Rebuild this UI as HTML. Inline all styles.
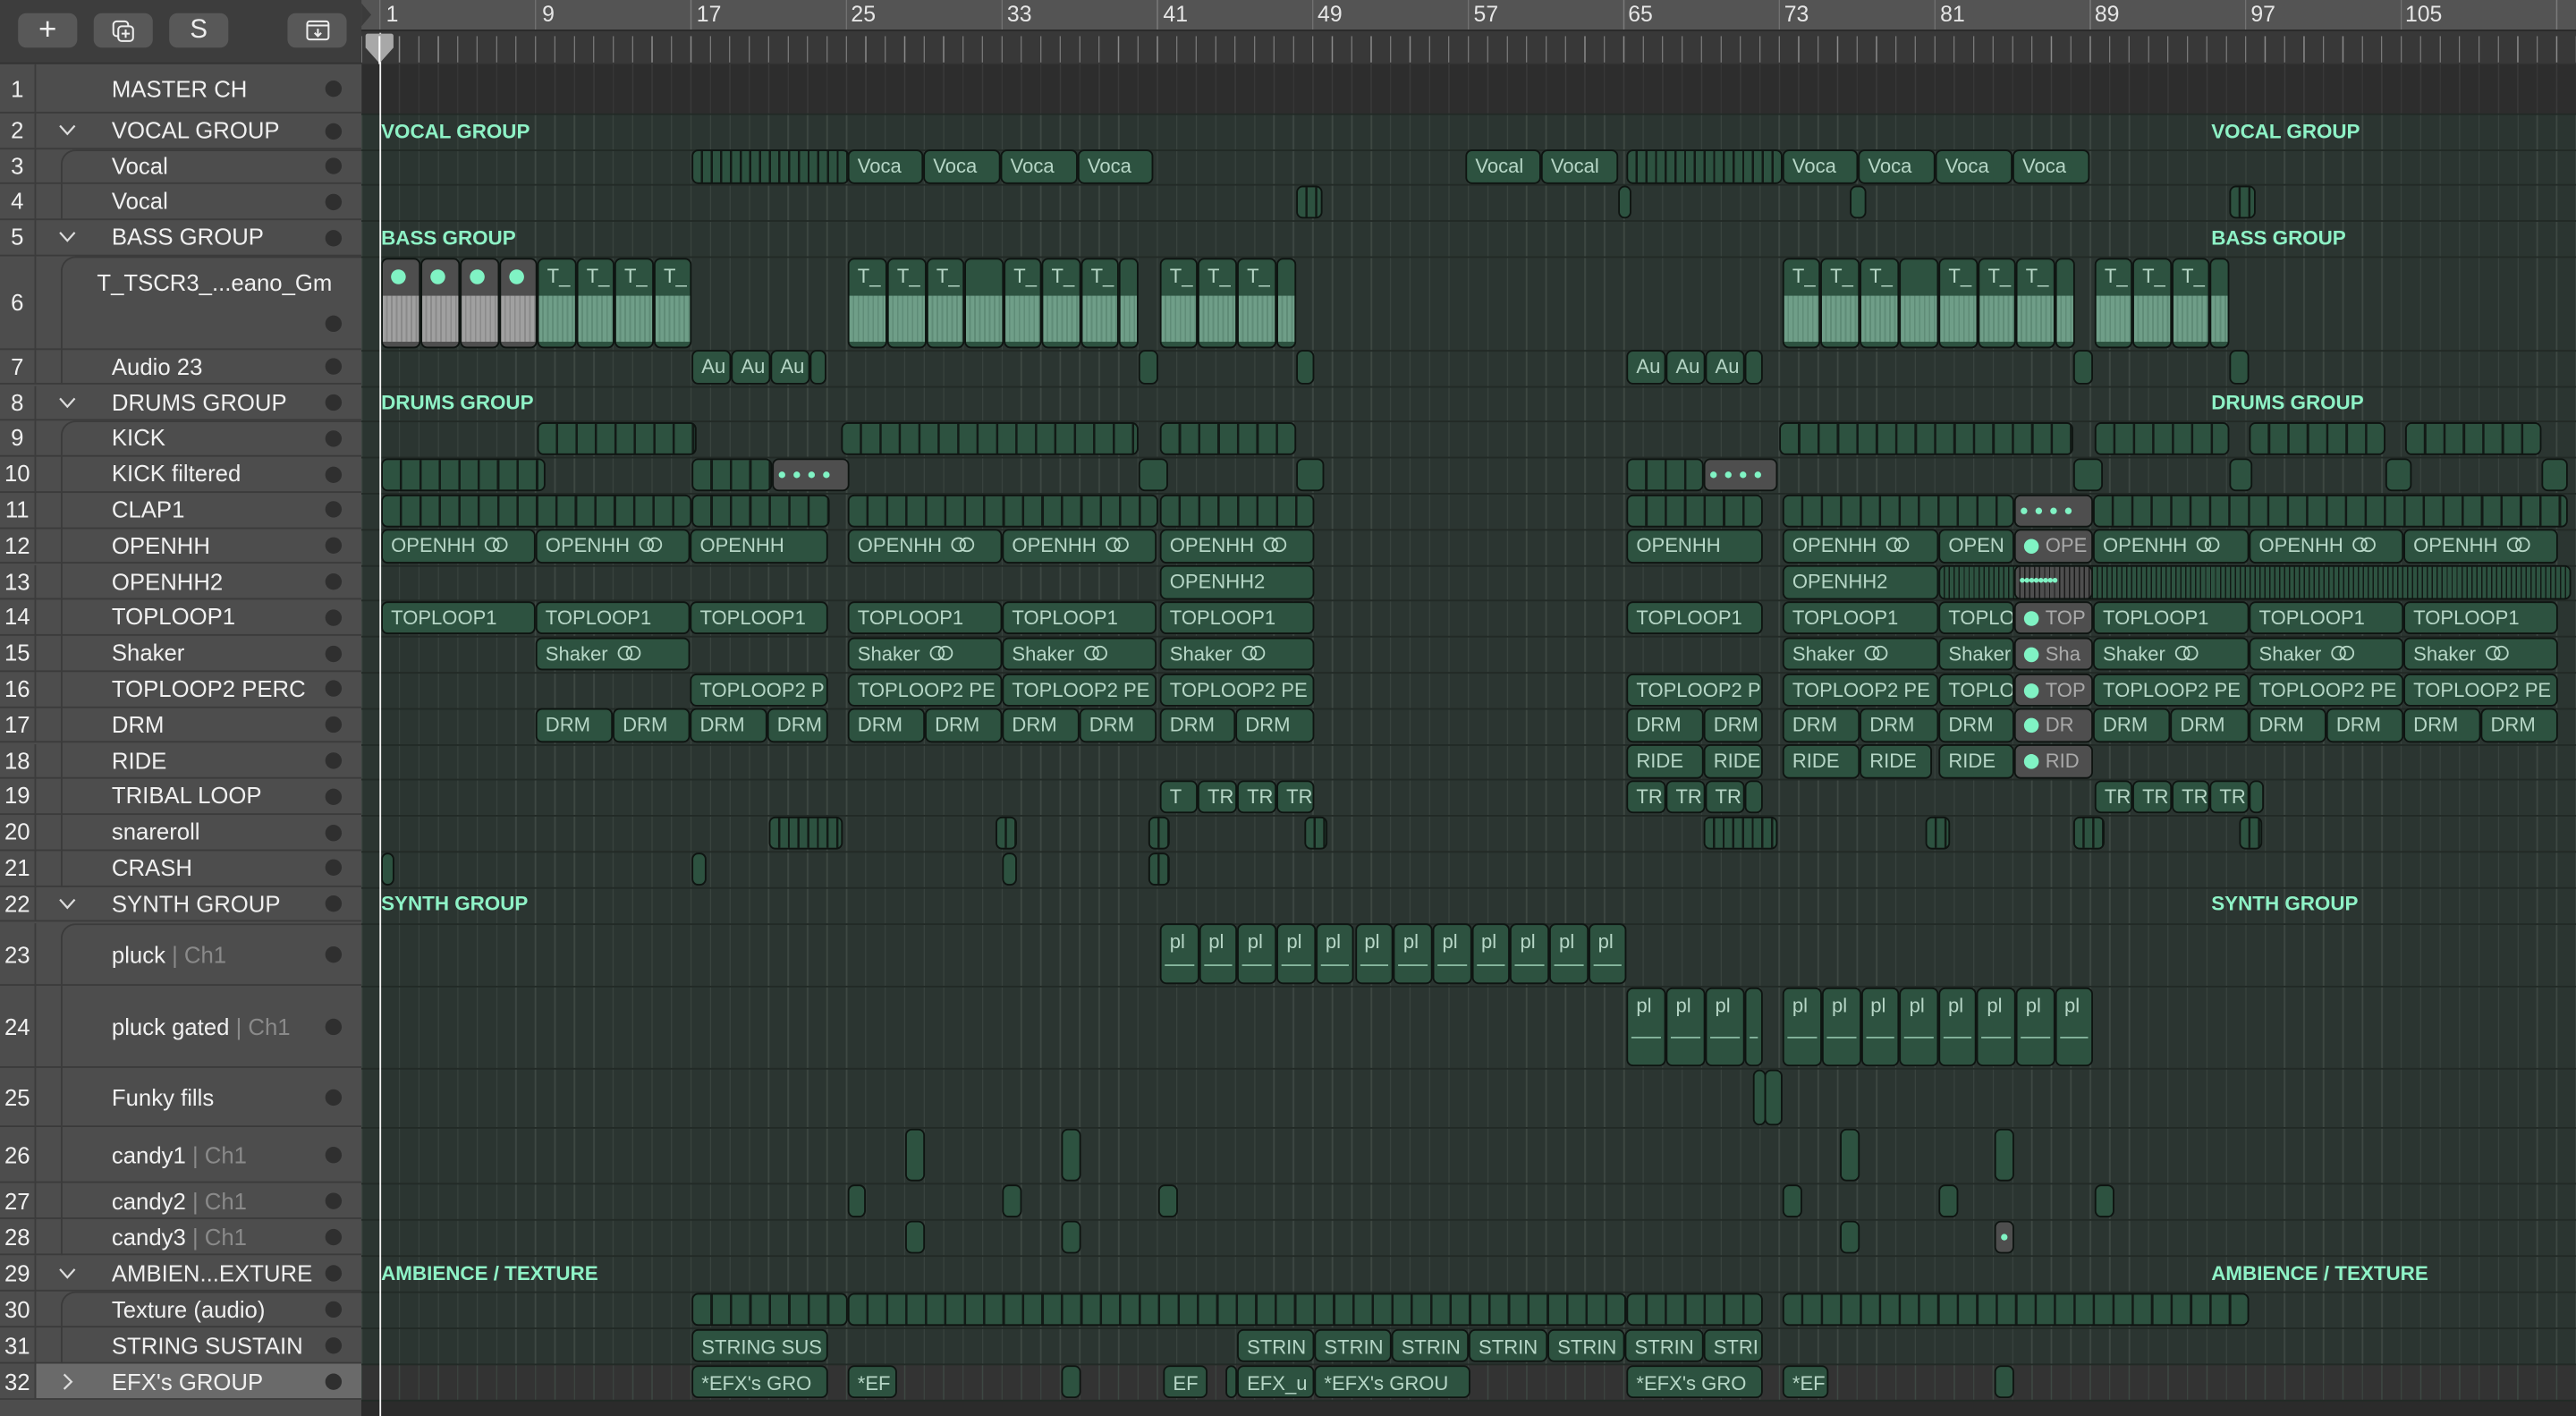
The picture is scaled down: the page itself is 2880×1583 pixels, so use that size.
<!DOCTYPE html>
<html><head><meta charset="utf-8"><style>
html,body{margin:0;padding:0;width:2880px;height:1582px;overflow:hidden;background:#2a2a2a}
#s{position:absolute;left:0;top:0;width:1568px;height:862px;transform:scale(1.83673);transform-origin:0 0;overflow:hidden;background:#2b2b2b;font-family:"Liberation Sans",sans-serif}
.lp{position:absolute;left:0;top:0;width:220px;height:862px;background:#4d4d4d}
.hd{position:absolute;left:0;top:0;width:220px;height:38px;background:#3d3d3d;border-bottom:1px solid #333}
.bt{position:absolute;top:7.5px;height:21.5px;background:#585858;border-radius:5px;color:#eee;text-align:center;line-height:21px;font-size:15px}
.L{position:absolute;left:0;width:220px;box-sizing:border-box;border-bottom:1px solid #3b3b3b;color:#f0f0f0;font-size:14px}
.L .n{position:absolute;left:0;width:22px;text-align:center;border-right:1px solid #3b3b3b;height:100%;box-sizing:border-box}
.L .t{position:absolute;left:68px;white-space:nowrap}
.L .c{position:absolute;left:35px;top:50%;margin-top:-5px;width:12px;height:10px}
.L .o{position:absolute;left:198px;width:10px;height:10px;border-radius:50%;background:#2f2f2f}
.L .gy{color:#8a8a8a}
.br{position:absolute;left:37px;border-left:1.5px solid #3b3b3b;border-top:1.5px solid #3b3b3b;border-top-left-radius:9px;width:183px;box-sizing:border-box}
.tl{position:absolute;left:220px;top:0;width:1348px;height:862px}
.ru{position:absolute;left:0;top:0;width:1348px;height:18px;background:#545454;background-image:repeating-linear-gradient(90deg,#7a7a7a 0 0.6px,transparent 0.6px 94.64px);background-position:11px 0}
.rn{position:absolute;top:0;color:#e6e6e6;font-size:13.5px;line-height:17px}
.tk{position:absolute;left:0;top:18px;width:1348px;height:21px;background:#383838;border-top:1.5px solid #2a2a2a;box-sizing:border-box;background-image:repeating-linear-gradient(90deg,#8a8a8a 0 0.6px,transparent 0.6px 11.83px);background-position:11px 3px;background-size:100% 16px;background-repeat:repeat-x}
.bg{position:absolute;left:0;width:1348px;background-color:#2b3531;background-image:repeating-linear-gradient(90deg,#3e4843 0 0.7px,transparent 0.7px 11.83px);background-position:11px 0}
.hl{position:absolute;left:220px;width:1348px;height:1px;background:#222a26}
.R{position:absolute;left:0;width:1568px}
.g{position:absolute;top:0.8px;bottom:0.8px;display:block;font-style:normal;background:#2d5240;border:1.1px solid #0e1411;border-radius:4px;box-sizing:border-box;color:#b6d6c6;font-size:12px;padding-left:5px;overflow:hidden;white-space:nowrap}
.d{background:repeating-linear-gradient(90deg,#2d5240 0 4.6px,#121a16 4.6px 5.9px)}
.d2{background:repeating-linear-gradient(90deg,#2d5240 0 10.4px,#121a16 10.4px 11.83px)}
.s{background:#4e4e4e}
.m{display:inline-block;width:9px;height:9px;border-radius:50%;background:#80f3c4;vertical-align:-1px;margin-right:4px}
.ms{display:inline-block;width:4px;height:4px;border-radius:50%;background:#80f3c4;margin:0 2.5px;vertical-align:2px}
.lo{display:inline-block;position:relative;width:15px;height:10px;margin-left:6px;vertical-align:-1px}
.lo:before,.lo:after{content:"";position:absolute;top:0;width:9px;height:9px;border:1.2px solid #b6d6c6;border-radius:50%;box-sizing:border-box}
.lo:before{left:0}.lo:after{left:5px}
.gl{position:absolute;color:#8ef2c6;font-weight:bold;font-size:12.2px;white-space:nowrap}
.w{position:absolute;left:0;right:0;bottom:3px;height:52%;background:repeating-linear-gradient(90deg,#6f9e88 0 2px,#5f8c77 2px 3px)}
.wg{background:repeating-linear-gradient(90deg,#a0a0a0 0 2px,#8a8a8a 2px 3px)}
.tp{line-height:14px;padding-top:3px}
.pl{position:absolute;left:2px;right:2px;height:1.2px;background:#88b8a0}
</style></head><body><div id="s">

<!-- LEFT PANEL -->
<div class="lp">
<div class="hd">
<div class="bt" style="left:11px;width:36px;font-size:19px;font-weight:300">+</div>
<div class="bt" style="left:57px;width:36px"><svg width="14" height="14" viewBox="0 0 14 14" style="margin-top:4px"><rect x="1" y="1" width="9" height="9" rx="2" fill="none" stroke="#eee" stroke-width="1.1"/><rect x="4" y="4" width="9" height="9" rx="2" fill="#585858" stroke="#eee" stroke-width="1.1"/><path d="M8.5 6v5M6 8.5h5" stroke="#eee" stroke-width="1.1"/></svg></div>
<div class="bt" style="left:103px;width:36px;font-size:16px">S</div>
<div class="bt" style="left:175px;width:36px"><svg width="15" height="13" viewBox="0 0 15 13" style="margin-top:4px"><rect x="1" y="1" width="13" height="11" rx="1.5" fill="none" stroke="#eee" stroke-width="1.1"/><path d="M1 3.5h13M7.5 5.5v4.5M5.5 8l2 2 2-2" fill="none" stroke="#eee" stroke-width="1.1"/></svg></div>
</div>

<div class="L" style="top:39px;height:30px;line-height:30px"><span class="n">1</span><span class="t">MASTER CH</span><span class="o" style="top:10px"></span></div>
<div class="L" style="top:69px;height:21.5px;line-height:21px"><span class="n">2</span><svg class="c" viewBox="0 0 12 10"><path d="M1.5 2.5 L6 7.5 L10.5 2.5" fill="none" stroke="#ddd" stroke-width="1.2"/></svg><span class="t">VOCAL GROUP</span><span class="o" style="top:5.5px"></span></div>
<div class="L" style="top:90.5px;height:21.8px;line-height:21px"><span class="n">3</span><span class="t">Vocal</span><span class="o" style="top:5.5px"></span></div>
<div class="L" style="top:112.3px;height:21.8px;line-height:21px"><span class="n">4</span><span class="t">Vocal</span><span class="o" style="top:5.5px"></span></div>
<div class="L" style="top:134.1px;height:21.8px;line-height:21px"><span class="n">5</span><svg class="c" viewBox="0 0 12 10"><path d="M1.5 2.5 L6 7.5 L10.5 2.5" fill="none" stroke="#ddd" stroke-width="1.2"/></svg><span class="t">BASS GROUP</span><span class="o" style="top:5.5px"></span></div>
<div class="L" style="top:155.9px;height:56.8px;line-height:56px"><span class="n">6</span><span class="t" style="left:59px;line-height:18px;top:7px">T_TSCR3_...eano_Gm</span><span class="o" style="top:36px"></span></div>
<div class="L" style="top:212.7px;height:21.8px;line-height:21px"><span class="n">7</span><span class="t">Audio 23</span><span class="o" style="top:5.5px"></span></div>
<div class="L" style="top:234.5px;height:21.8px;line-height:21px"><span class="n">8</span><svg class="c" viewBox="0 0 12 10"><path d="M1.5 2.5 L6 7.5 L10.5 2.5" fill="none" stroke="#ddd" stroke-width="1.2"/></svg><span class="t">DRUMS GROUP</span><span class="o" style="top:5.5px"></span></div>
<div class="L" style="top:256.3px;height:21.8px;line-height:21px"><span class="n">9</span><span class="t">KICK</span><span class="o" style="top:5.5px"></span></div>
<div class="L" style="top:278.1px;height:21.8px;line-height:21px"><span class="n">10</span><span class="t">KICK filtered</span><span class="o" style="top:5.5px"></span></div>
<div class="L" style="top:299.9px;height:21.8px;line-height:21px"><span class="n">11</span><span class="t">CLAP1</span><span class="o" style="top:5.5px"></span></div>
<div class="L" style="top:321.7px;height:21.8px;line-height:21px"><span class="n">12</span><span class="t">OPENHH</span><span class="o" style="top:5.5px"></span></div>
<div class="L" style="top:343.5px;height:21.8px;line-height:21px"><span class="n">13</span><span class="t">OPENHH2</span><span class="o" style="top:5.5px"></span></div>
<div class="L" style="top:365.3px;height:21.8px;line-height:21px"><span class="n">14</span><span class="t">TOPLOOP1</span><span class="o" style="top:5.5px"></span></div>
<div class="L" style="top:387.1px;height:21.8px;line-height:21px"><span class="n">15</span><span class="t">Shaker</span><span class="o" style="top:5.5px"></span></div>
<div class="L" style="top:408.9px;height:21.8px;line-height:21px"><span class="n">16</span><span class="t">TOPLOOP2 PERC</span><span class="o" style="top:5.5px"></span></div>
<div class="L" style="top:430.7px;height:21.8px;line-height:21px"><span class="n">17</span><span class="t">DRM</span><span class="o" style="top:5.5px"></span></div>
<div class="L" style="top:452.5px;height:21.8px;line-height:21px"><span class="n">18</span><span class="t">RIDE</span><span class="o" style="top:5.5px"></span></div>
<div class="L" style="top:474.3px;height:21.8px;line-height:21px"><span class="n">19</span><span class="t">TRIBAL LOOP</span><span class="o" style="top:5.5px"></span></div>
<div class="L" style="top:496.1px;height:21.8px;line-height:21px"><span class="n">20</span><span class="t">snareroll</span><span class="o" style="top:5.5px"></span></div>
<div class="L" style="top:517.9px;height:21.8px;line-height:21px"><span class="n">21</span><span class="t">CRASH</span><span class="o" style="top:5.5px"></span></div>
<div class="L" style="top:539.7px;height:21.8px;line-height:21px"><span class="n">22</span><svg class="c" viewBox="0 0 12 10"><path d="M1.5 2.5 L6 7.5 L10.5 2.5" fill="none" stroke="#ddd" stroke-width="1.2"/></svg><span class="t">SYNTH GROUP</span><span class="o" style="top:5.5px"></span></div>
<div class="L" style="top:561.5px;height:38.5px;line-height:38px"><span class="n">23</span><span class="t">pluck <span class="gy">| Ch1</span></span><span class="o" style="top:14px"></span></div>
<div class="L" style="top:600px;height:50px;line-height:50px"><span class="n">24</span><span class="t">pluck gated <span class="gy">| Ch1</span></span><span class="o" style="top:20px"></span></div>
<div class="L" style="top:650px;height:36px;line-height:36px"><span class="n">25</span><span class="t">Funky fills</span><span class="o" style="top:13px"></span></div>
<div class="L" style="top:686px;height:34px;line-height:34px"><span class="n">26</span><span class="t">candy1 <span class="gy">| Ch1</span></span><span class="o" style="top:12px"></span></div>
<div class="L" style="top:720px;height:22px;line-height:22px"><span class="n">27</span><span class="t">candy2 <span class="gy">| Ch1</span></span><span class="o" style="top:6px"></span></div>
<div class="L" style="top:742px;height:22px;line-height:22px"><span class="n">28</span><span class="t">candy3 <span class="gy">| Ch1</span></span><span class="o" style="top:6px"></span></div>
<div class="L" style="top:764px;height:22px;line-height:22px"><span class="n">29</span><svg class="c" viewBox="0 0 12 10"><path d="M1.5 2.5 L6 7.5 L10.5 2.5" fill="none" stroke="#ddd" stroke-width="1.2"/></svg><span class="t">AMBIEN...EXTURE</span><span class="o" style="top:6px"></span></div>
<div class="L" style="top:786px;height:22px;line-height:22px"><span class="n">30</span><span class="t">Texture (audio)</span><span class="o" style="top:6px"></span></div>
<div class="L" style="top:808px;height:22px;line-height:22px"><span class="n">31</span><span class="t">STRING SUSTAIN</span><span class="o" style="top:6px"></span></div>
<div class="L" style="top:830px;height:22px;line-height:22px;background:#6a6a6a"><span class="n" style="background:#4d4d4d">32</span><svg class="c" viewBox="0 0 12 10"><path d="M4 0.5 L8.5 5 L4 9.5" fill="none" stroke="#ddd" stroke-width="1.2"/></svg><span class="t">EFX's GROUP</span><span class="o" style="top:6px"></span></div>
<div class="br" style="top:90.5px;height:43.6px"></div>
<div class="br" style="top:155.9px;height:78.6px"></div>
<div class="br" style="top:256.3px;height:283.4px"></div>
<div class="br" style="top:561.5px;height:202.5px"></div>
<div class="br" style="top:786px;height:44px"></div>
</div>

<!-- TIMELINE -->
<div class="tl">
<div class="ru"></div>
<span class="rn" style="left:15px">1</span><span class="rn" style="left:110px">9</span><span class="rn" style="left:204px">17</span><span class="rn" style="left:298px">25</span><span class="rn" style="left:393px">33</span><span class="rn" style="left:488px">41</span><span class="rn" style="left:582px">49</span><span class="rn" style="left:677px">57</span><span class="rn" style="left:771px">65</span><span class="rn" style="left:866px">73</span><span class="rn" style="left:961px">81</span><span class="rn" style="left:1055px">89</span><span class="rn" style="left:1150px">97</span><span class="rn" style="left:1244px">105</span>
<div class="tk"></div>
<div class="bg" style="top:39px;height:30px;background-color:#2d2d2d;background-image:repeating-linear-gradient(90deg,#3a3a3a 0 0.7px,transparent 0.7px 11.83px)"></div>
<div class="bg" style="top:69px;height:761px"></div>
<div class="bg" style="top:830px;height:22px;background-color:#333"></div>
<div class="bg" style="top:852px;height:10px;background:#2b2b2b"></div>
</div>
<div class="hl" style="top:69px"></div><div class="hl" style="top:90.5px"></div><div class="hl" style="top:112.3px"></div><div class="hl" style="top:134.1px"></div><div class="hl" style="top:155.9px"></div><div class="hl" style="top:212.7px"></div><div class="hl" style="top:234.5px"></div><div class="hl" style="top:256.3px"></div><div class="hl" style="top:278.1px"></div><div class="hl" style="top:299.9px"></div><div class="hl" style="top:321.7px"></div><div class="hl" style="top:343.5px"></div><div class="hl" style="top:365.3px"></div><div class="hl" style="top:387.1px"></div><div class="hl" style="top:408.9px"></div><div class="hl" style="top:430.7px"></div><div class="hl" style="top:452.5px"></div><div class="hl" style="top:474.3px"></div><div class="hl" style="top:496.1px"></div><div class="hl" style="top:517.9px"></div><div class="hl" style="top:539.7px"></div><div class="hl" style="top:561.5px"></div><div class="hl" style="top:600px"></div><div class="hl" style="top:650px"></div><div class="hl" style="top:686px"></div><div class="hl" style="top:720px"></div><div class="hl" style="top:742px"></div><div class="hl" style="top:764px"></div><div class="hl" style="top:786px"></div><div class="hl" style="top:808px"></div><div class="hl" style="top:830px"></div><div class="hl" style="top:852px"></div>

<!-- group labels -->
<span class="gl" style="left:232px;top:73px">VOCAL GROUP</span><span class="gl" style="left:1346px;top:73px">VOCAL GROUP</span>
<span class="gl" style="left:232px;top:138px">BASS GROUP</span><span class="gl" style="left:1346px;top:138px">BASS GROUP</span>
<span class="gl" style="left:232px;top:238px">DRUMS GROUP</span><span class="gl" style="left:1346px;top:238px">DRUMS GROUP</span>
<span class="gl" style="left:232px;top:543px">SYNTH GROUP</span><span class="gl" style="left:1346px;top:543px">SYNTH GROUP</span>
<span class="gl" style="left:232px;top:768px">AMBIENCE / TEXTURE</span><span class="gl" style="left:1346px;top:768px">AMBIENCE / TEXTURE</span>

<!-- row 3 -->
<div class="R" style="top:90.5px;height:21.8px;line-height:19px">
<i class="g d" style="left:421px;width:96px"></i>
<i class="g" style="left:516px;width:46px">Voca</i><i class="g" style="left:562px;width:47px">Voca</i><i class="g" style="left:609px;width:47px">Voca</i><i class="g" style="left:656px;width:46px">Voca</i>
<i class="g" style="left:892px;width:46px">Vocal</i><i class="g" style="left:938px;width:47px">Vocal</i>
<i class="g d" style="left:990px;width:95px"></i>
<i class="g" style="left:1085px;width:46px">Voca</i><i class="g" style="left:1131px;width:47px">Voca</i><i class="g" style="left:1178px;width:47px">Voca</i><i class="g" style="left:1225px;width:47px">Voca</i>
</div>
<!-- row 4 -->
<div class="R" style="top:112.3px;height:21.8px">
<i class="g d" style="left:789px;width:16px"></i><i class="g" style="left:985px;width:8px"></i><i class="g" style="left:1126px;width:10px"></i><i class="g d" style="left:1357px;width:16px"></i>
</div>
<!-- row 6 -->
<div class="R" style="top:155.9px;height:56.8px">
<i class="g s tp" style="left:232px;width:24px"><span class="m"></span><span class="w wg"></span></i><i class="g s tp" style="left:256px;width:24px"><span class="m"></span><span class="w wg"></span></i><i class="g s tp" style="left:280px;width:24px"><span class="m"></span><span class="w wg"></span></i><i class="g s tp" style="left:304px;width:23px"><span class="m"></span><span class="w wg"></span></i>
<i class="g tp" style="left:327px;width:24px">T_<span class="w"></span></i><i class="g tp" style="left:351px;width:23px">T_<span class="w"></span></i><i class="g tp" style="left:374px;width:24px">T_<span class="w"></span></i><i class="g tp" style="left:398px;width:23px">T_<span class="w"></span></i>
<i class="g tp" style="left:516px;width:24px">T_<span class="w"></span></i><i class="g tp" style="left:540px;width:24px">T_<span class="w"></span></i><i class="g tp" style="left:564px;width:23px">T_<span class="w"></span></i><i class="g tp" style="left:587px;width:24px"><span class="w"></span></i><i class="g tp" style="left:611px;width:23px">T_<span class="w"></span></i><i class="g tp" style="left:634px;width:24px">T_<span class="w"></span></i><i class="g tp" style="left:658px;width:23px">T_<span class="w"></span></i><i class="g tp" style="left:681px;width:12px"><span class="w"></span></i>
<i class="g tp" style="left:706px;width:23px">T_<span class="w"></span></i><i class="g tp" style="left:729px;width:24px">T_<span class="w"></span></i><i class="g tp" style="left:753px;width:24px">T_<span class="w"></span></i><i class="g tp" style="left:777px;width:12px"><span class="w"></span></i>
<i class="g tp" style="left:1085px;width:23px">T_<span class="w"></span></i><i class="g tp" style="left:1108px;width:24px">T_<span class="w"></span></i><i class="g tp" style="left:1132px;width:24px">T_<span class="w"></span></i><i class="g tp" style="left:1156px;width:24px"><span class="w"></span></i><i class="g tp" style="left:1180px;width:24px">T_<span class="w"></span></i><i class="g tp" style="left:1204px;width:23px">T_<span class="w"></span></i><i class="g tp" style="left:1227px;width:24px">T_<span class="w"></span></i><i class="g tp" style="left:1251px;width:12px"><span class="w"></span></i>
<i class="g tp" style="left:1275px;width:23px">T_<span class="w"></span></i><i class="g tp" style="left:1298px;width:24px">T_<span class="w"></span></i><i class="g tp" style="left:1322px;width:23px">T_<span class="w"></span></i><i class="g tp" style="left:1345px;width:12px"><span class="w"></span></i>
</div>
<!-- row 7 -->
<div class="R" style="top:212.7px;height:21.8px;line-height:19px">
<i class="g" style="left:421px;width:24px">Au</i><i class="g" style="left:445px;width:24px">Au</i><i class="g" style="left:469px;width:24px">Au</i><i class="g" style="left:493px;width:10px"></i><i class="g" style="left:693px;width:12px"></i><i class="g" style="left:789px;width:11px"></i>
<i class="g" style="left:990px;width:24px">Au</i><i class="g" style="left:1014px;width:24px">Au</i><i class="g" style="left:1038px;width:24px">Au</i><i class="g" style="left:1062px;width:11px"></i><i class="g" style="left:1262px;width:12px"></i><i class="g" style="left:1357px;width:12px"></i>
</div>
<!-- row 9 -->
<div class="R" style="top:256.3px;height:21.8px">
<i class="g d2" style="left:327px;width:97px"></i><i class="g d2" style="left:512px;width:181px"></i><i class="g d2" style="left:706px;width:83px"></i>
<i class="g d2" style="left:1083px;width:179px"></i><i class="g d2" style="left:1275px;width:82px"></i><i class="g d2" style="left:1369px;width:83px"></i><i class="g d2" style="left:1464px;width:83px"></i>
</div>
<!-- row 10 -->
<div class="R" style="top:278.1px;height:21.8px;line-height:18px">
<i class="g d2" style="left:232px;width:100px"></i><i class="g d2" style="left:421px;width:49px"></i><i class="g s" style="left:470px;width:47px;padding-left:0"><span class="ms"></span><span class="ms"></span><span class="ms"></span><span class="ms"></span></i><i class="g" style="left:693px;width:18px"></i><i class="g" style="left:789px;width:17px"></i>
<i class="g d2" style="left:990px;width:47px"></i><i class="g s" style="left:1037px;width:45px;padding-left:0"><span class="ms"></span><span class="ms"></span><span class="ms"></span><span class="ms"></span></i><i class="g" style="left:1262px;width:18px"></i><i class="g" style="left:1357px;width:14px"></i><i class="g" style="left:1452px;width:16px"></i><i class="g" style="left:1547px;width:16px"></i>
</div>
<!-- row 11 -->
<div class="R" style="top:299.9px;height:21.8px;line-height:18px">
<i class="g d2" style="left:232px;width:189px"></i><i class="g d2" style="left:421px;width:84px"></i><i class="g d2" style="left:516px;width:189px"></i><i class="g d2" style="left:706px;width:94px"></i>
<i class="g d2" style="left:990px;width:83px"></i><i class="g d2" style="left:1085px;width:141px"></i><i class="g s" style="left:1226px;width:48px;padding-left:0"><span class="ms"></span><span class="ms"></span><span class="ms"></span><span class="ms"></span></i><i class="g d2" style="left:1274px;width:289px"></i>
</div>
<!-- row 12 -->
<div class="R" style="top:321.7px;height:21.8px;line-height:19px">
<i class="g" style="left:232px;width:94px">OPENHH<span class="lo"></span></i><i class="g" style="left:326px;width:94px">OPENHH<span class="lo"></span></i><i class="g" style="left:420px;width:84px">OPENHH</i><i class="g" style="left:516px;width:94px">OPENHH<span class="lo"></span></i><i class="g" style="left:610px;width:94px">OPENHH<span class="lo"></span></i><i class="g" style="left:706px;width:94px">OPENHH<span class="lo"></span></i>
<i class="g" style="left:990px;width:83px">OPENHH</i><i class="g" style="left:1085px;width:95px">OPENHH<span class="lo"></span></i><i class="g" style="left:1180px;width:46px">OPEN</i><i class="g s" style="left:1226px;width:48px;color:#aaa"><span class="m"></span>OPE</i><i class="g" style="left:1274px;width:95px">OPENHH<span class="lo"></span></i><i class="g" style="left:1369px;width:94px">OPENHH<span class="lo"></span></i><i class="g" style="left:1463px;width:94px">OPENHH<span class="lo"></span></i>
</div>
<!-- row 13 -->
<div class="R" style="top:343.5px;height:21.8px;line-height:19px">
<i class="g" style="left:706px;width:94px">OPENHH2</i><i class="g" style="left:1085px;width:95px">OPENHH2</i><i class="g d" style="left:1180px;width:385px;background:repeating-linear-gradient(90deg,#2d5240 0 2.2px,#121a16 2.2px 3px)"></i><i class="g s" style="left:1226px;width:48px;padding-left:2px;line-height:16px;background:repeating-linear-gradient(90deg,#4e4e4e 0 2.2px,#1a1a1a 2.2px 3px)"><span style="color:#80f3c4;font-size:11px;letter-spacing:-1px">••••••••</span></i>
</div>
<!-- row 14 -->
<div class="R" style="top:365.3px;height:21.8px;line-height:19px">
<i class="g" style="left:232px;width:94px">TOPLOOP1</i><i class="g" style="left:326px;width:94px">TOPLOOP1</i><i class="g" style="left:420px;width:84px">TOPLOOP1</i><i class="g" style="left:516px;width:94px">TOPLOOP1</i><i class="g" style="left:610px;width:94px">TOPLOOP1</i><i class="g" style="left:706px;width:94px">TOPLOOP1</i>
<i class="g" style="left:990px;width:83px">TOPLOOP1</i><i class="g" style="left:1085px;width:95px">TOPLOOP1</i><i class="g" style="left:1180px;width:46px">TOPLO</i><i class="g s" style="left:1226px;width:48px;color:#aaa"><span class="m"></span>TOP</i><i class="g" style="left:1274px;width:95px">TOPLOOP1</i><i class="g" style="left:1369px;width:94px">TOPLOOP1</i><i class="g" style="left:1463px;width:94px">TOPLOOP1</i>
</div>
<!-- row 15 -->
<div class="R" style="top:387.1px;height:21.8px;line-height:19px">
<i class="g" style="left:326px;width:94px">Shaker<span class="lo"></span></i><i class="g" style="left:516px;width:94px">Shaker<span class="lo"></span></i><i class="g" style="left:610px;width:94px">Shaker<span class="lo"></span></i><i class="g" style="left:706px;width:94px">Shaker<span class="lo"></span></i>
<i class="g" style="left:1085px;width:95px">Shaker<span class="lo"></span></i><i class="g" style="left:1180px;width:46px">Shaker</i><i class="g s" style="left:1226px;width:48px;color:#aaa"><span class="m"></span>Sha</i><i class="g" style="left:1274px;width:95px">Shaker<span class="lo"></span></i><i class="g" style="left:1369px;width:94px">Shaker<span class="lo"></span></i><i class="g" style="left:1463px;width:94px">Shaker<span class="lo"></span></i>
</div>
<!-- row 16 -->
<div class="R" style="top:408.9px;height:21.8px;line-height:19px">
<i class="g" style="left:420px;width:84px">TOPLOOP2 P</i><i class="g" style="left:516px;width:94px">TOPLOOP2 PE</i><i class="g" style="left:610px;width:94px">TOPLOOP2 PE</i><i class="g" style="left:706px;width:94px">TOPLOOP2 PE</i>
<i class="g" style="left:990px;width:83px">TOPLOOP2 P</i><i class="g" style="left:1085px;width:95px">TOPLOOP2 PE</i><i class="g" style="left:1180px;width:46px">TOPLO</i><i class="g s" style="left:1226px;width:48px;color:#aaa"><span class="m"></span>TOP</i><i class="g" style="left:1274px;width:95px">TOPLOOP2 PE</i><i class="g" style="left:1369px;width:94px">TOPLOOP2 PE</i><i class="g" style="left:1463px;width:94px">TOPLOOP2 PE</i>
</div>
<!-- row 17 -->
<div class="R" style="top:430.7px;height:21.8px;line-height:19px">
<i class="g" style="left:326px;width:47px">DRM</i><i class="g" style="left:373px;width:47px">DRM</i><i class="g" style="left:420px;width:47px">DRM</i><i class="g" style="left:467px;width:37px">DRM</i><i class="g" style="left:516px;width:47px">DRM</i><i class="g" style="left:563px;width:47px">DRM</i><i class="g" style="left:610px;width:47px">DRM</i><i class="g" style="left:657px;width:47px">DRM</i><i class="g" style="left:706px;width:46px">DRM</i><i class="g" style="left:752px;width:48px">DRM</i>
<i class="g" style="left:990px;width:47px">DRM</i><i class="g" style="left:1037px;width:36px">DRM</i><i class="g" style="left:1085px;width:47px">DRM</i><i class="g" style="left:1132px;width:48px">DRM</i><i class="g" style="left:1180px;width:46px">DRM</i><i class="g s" style="left:1226px;width:48px;color:#aaa"><span class="m"></span>DR</i><i class="g" style="left:1274px;width:47px">DRM</i><i class="g" style="left:1321px;width:48px">DRM</i><i class="g" style="left:1369px;width:47px">DRM</i><i class="g" style="left:1416px;width:47px">DRM</i><i class="g" style="left:1463px;width:47px">DRM</i><i class="g" style="left:1510px;width:47px">DRM</i>
</div>
<!-- row 18 -->
<div class="R" style="top:452.5px;height:21.8px;line-height:19px">
<i class="g" style="left:990px;width:47px">RIDE</i><i class="g" style="left:1037px;width:36px">RIDE</i><i class="g" style="left:1085px;width:47px">RIDE</i><i class="g" style="left:1132px;width:44px">RIDE</i><i class="g" style="left:1180px;width:46px">RIDE</i><i class="g s" style="left:1226px;width:48px;color:#aaa"><span class="m"></span>RID</i>
</div>
<!-- row 19 -->
<div class="R" style="top:474.3px;height:21.8px;line-height:19px">
<i class="g" style="left:706px;width:23px">T</i><i class="g" style="left:729px;width:24px">TR</i><i class="g" style="left:753px;width:24px">TR</i><i class="g" style="left:777px;width:23px">TR</i>
<i class="g" style="left:990px;width:24px">TR</i><i class="g" style="left:1014px;width:24px">TR</i><i class="g" style="left:1038px;width:24px">TR</i><i class="g" style="left:1062px;width:11px"></i>
<i class="g" style="left:1275px;width:23px">TR</i><i class="g" style="left:1298px;width:24px">TR</i><i class="g" style="left:1322px;width:23px">TR</i><i class="g" style="left:1345px;width:24px">TR</i><i class="g" style="left:1369px;width:9px"></i>
</div>
<!-- row 20 -->
<div class="R" style="top:496.1px;height:21.8px">
<i class="g d" style="left:468px;width:45px"></i><i class="g d" style="left:606px;width:13px"></i><i class="g d" style="left:699px;width:13px"></i><i class="g d" style="left:794px;width:14px"></i>
<i class="g d" style="left:1037px;width:45px"></i><i class="g d" style="left:1172px;width:15px"></i><i class="g d" style="left:1262px;width:19px"></i><i class="g d" style="left:1363px;width:14px"></i>
</div>
<!-- row 21 -->
<div class="R" style="top:517.9px;height:21.8px">
<i class="g" style="left:232px;width:8px"></i><i class="g" style="left:421px;width:9px"></i><i class="g" style="left:610px;width:9px"></i><i class="g d" style="left:699px;width:13px"></i>
</div>
<!-- row 23 -->
<div class="R" style="top:561.5px;height:38.5px">
<i class="g tp" style="left:706px;width:23.7px">pl<span class="pl" style="top:24px"></span></i><i class="g tp" style="left:729.7px;width:23.7px">pl<span class="pl" style="top:24px"></span></i><i class="g tp" style="left:753.4px;width:23.7px">pl<span class="pl" style="top:24px"></span></i><i class="g tp" style="left:777.1px;width:23.7px">pl<span class="pl" style="top:24px"></span></i><i class="g tp" style="left:800.8px;width:23.7px">pl<span class="pl" style="top:24px"></span></i><i class="g tp" style="left:824.5px;width:23.7px">pl<span class="pl" style="top:24px"></span></i><i class="g tp" style="left:848.2px;width:23.7px">pl<span class="pl" style="top:24px"></span></i><i class="g tp" style="left:871.9px;width:23.7px">pl<span class="pl" style="top:24px"></span></i><i class="g tp" style="left:895.6px;width:23.7px">pl<span class="pl" style="top:24px"></span></i><i class="g tp" style="left:919.3px;width:23.7px">pl<span class="pl" style="top:24px"></span></i><i class="g tp" style="left:943px;width:23.7px">pl<span class="pl" style="top:24px"></span></i><i class="g tp" style="left:966.7px;width:23.3px">pl<span class="pl" style="top:24px"></span></i>
</div>
<!-- row 24 -->
<div class="R" style="top:600px;height:50px">
<i class="g tp" style="left:990px;width:24px">pl<span class="pl" style="top:29px"></span></i><i class="g tp" style="left:1014px;width:24px">pl<span class="pl" style="top:29px"></span></i><i class="g tp" style="left:1038px;width:24px">pl<span class="pl" style="top:29px"></span></i><i class="g" style="left:1062px;width:11px"><span class="pl" style="top:29px"></span></i>
<i class="g tp" style="left:1085px;width:24px">pl<span class="pl" style="top:29px"></span></i><i class="g tp" style="left:1109px;width:23.6px">pl<span class="pl" style="top:29px"></span></i><i class="g tp" style="left:1132.6px;width:23.6px">pl<span class="pl" style="top:29px"></span></i><i class="g tp" style="left:1156.2px;width:23.6px">pl<span class="pl" style="top:29px"></span></i><i class="g tp" style="left:1179.8px;width:23.6px">pl<span class="pl" style="top:29px"></span></i><i class="g tp" style="left:1203.4px;width:23.6px">pl<span class="pl" style="top:29px"></span></i><i class="g tp" style="left:1227px;width:23.6px">pl<span class="pl" style="top:29px"></span></i><i class="g tp" style="left:1250.6px;width:23.4px">pl<span class="pl" style="top:29px"></span></i>
</div>
<!-- row 25 -->
<div class="R" style="top:650px;height:36px"><i class="g" style="left:1067px;width:8px"></i><i class="g" style="left:1074px;width:11px"></i></div>
<!-- row 26 -->
<div class="R" style="top:686px;height:34px"><i class="g" style="left:551px;width:12px"></i><i class="g" style="left:646px;width:12px"></i><i class="g" style="left:1120px;width:12px"></i><i class="g" style="left:1214px;width:12px"></i></div>
<!-- row 27 -->
<div class="R" style="top:720px;height:22px"><i class="g" style="left:516px;width:11px"></i><i class="g" style="left:610px;width:12px"></i><i class="g" style="left:705px;width:12px"></i><i class="g" style="left:1085px;width:12px"></i><i class="g" style="left:1180px;width:12px"></i><i class="g" style="left:1275px;width:12px"></i></div>
<!-- row 28 -->
<div class="R" style="top:742px;height:22px"><i class="g" style="left:551px;width:12px"></i><i class="g" style="left:646px;width:12px"></i><i class="g" style="left:1120px;width:12px"></i><i class="g s" style="left:1214px;width:12px;padding-left:2.5px;line-height:18px"><span class="ms" style="margin:0"></span></i></div>
<!-- row 30 -->
<div class="R" style="top:786px;height:22px">
<i class="g d2" style="left:421px;width:95px"></i><i class="g d2" style="left:516px;width:474px"></i><i class="g d2" style="left:990px;width:83px"></i><i class="g d2" style="left:1085px;width:284px"></i>
</div>
<!-- row 31 -->
<div class="R" style="top:808px;height:22px;line-height:20px">
<i class="g" style="left:421px;width:83px">STRING SUS</i><i class="g" style="left:753px;width:47px">STRIN</i><i class="g" style="left:800px;width:47px">STRIN</i><i class="g" style="left:847px;width:47px">STRIN</i><i class="g" style="left:894px;width:48px">STRIN</i><i class="g" style="left:942px;width:47px">STRIN</i><i class="g" style="left:989px;width:48px">STRIN</i><i class="g" style="left:1037px;width:36px">STRI</i>
</div>
<!-- row 32 -->
<div class="R" style="top:830px;height:22px;line-height:20px">
<i class="g" style="left:421px;width:83px">*EFX's GRO</i><i class="g" style="left:516px;width:30px">*EF</i><i class="g" style="left:646px;width:12px"></i><i class="g" style="left:708px;width:27px">EF</i><i class="g" style="left:746px;width:7px"></i><i class="g" style="left:753px;width:47px">EFX_u</i><i class="g" style="left:800px;width:95px">*EFX's GROU</i><i class="g" style="left:990px;width:83px">*EFX's GRO</i><i class="g" style="left:1085px;width:28px">*EF</i><i class="g" style="left:1214px;width:12px"></i>
</div>

<!-- playhead -->
<div style="position:absolute;left:230.5px;top:20px;width:1.2px;height:842px;background:#f2f2f2"></div>
<svg style="position:absolute;left:221px;top:20px" width="20" height="20" viewBox="0 0 20 20"><path d="M1.5 2 Q1.5 0.5 3 0.5 H17 Q18.5 0.5 18.5 2 V9 L10 18.5 L1.5 9 Z" fill="#a8a8a8"/><path d="M10 2v17" stroke="#fff" stroke-width="1.1"/></svg>
<svg style="position:absolute;left:220px;top:0" width="8" height="18" viewBox="0 0 8 18"><path d="M0 2 L6 9 L0 16Z" fill="#3b3b3b"/></svg>
</div></body></html>
